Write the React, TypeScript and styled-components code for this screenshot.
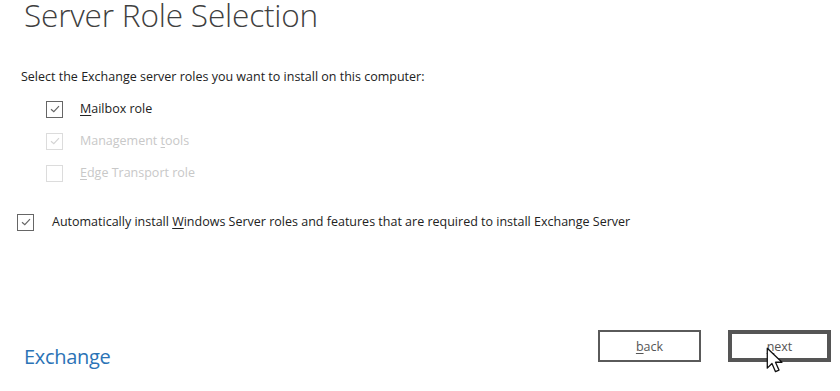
import React from "react";
import styled, { createGlobalStyle } from "styled-components";

const Global = createGlobalStyle`
  html, body { margin: 0; padding: 0; background: #ffffff; }
  body { font-family: "Open Sans", "Noto Sans", sans-serif; }
`;

const Page = styled.div`
  width: 840px;
  height: 391px;
  box-sizing: border-box;
  display: flex;
  flex-direction: column;
  background: #fff;
  overflow: hidden;
`;

const Title = styled.h1`
  margin: 0;
  padding: 0 0 0 24px;
  font-family: "Open Sans", "Noto Sans", sans-serif;
  font-weight: 300;
  font-size: 31.6px;
  line-height: 30px;
  color: #3f3f3f;
  letter-spacing: -0.2px;
`;

const Body = styled.div`
  display: flex;
  flex-direction: column;
  padding: 38px 0 0 21px;
  flex: 1;
`;

const Prompt = styled.div`
  font-size: 12.5px;
  line-height: 18px;
  color: #222;
`;

const RoleList = styled.div`
  display: flex;
  flex-direction: column;
  gap: 14px;
  margin: 14px 0 0 25px;
`;

const Row = styled.label<{ $disabled?: boolean }>`
  display: flex;
  align-items: center;
  gap: 17px;
  font-size: 12.5px;
  line-height: 18px;
  color: ${(p) => (p.$disabled ? "#c8c8c8" : "#222")};
`;

const Box = styled.span<{ $disabled?: boolean }>`
  width: 17px;
  height: 17px;
  box-sizing: border-box;
  border: 1.5px solid ${(p) => (p.$disabled ? "#dcdcdc" : "#666")};
  display: flex;
  align-items: center;
  justify-content: center;
  background: #fff;
  flex: none;
`;

const U = styled.span`
  text-decoration: underline;
  text-underline-offset: 2px;
`;

const AutoRow = styled(Row)`
  margin: 31px 0 0 -4px;
  gap: 18px;
`;

const Footer = styled.div`
  display: flex;
  align-items: flex-start;
  justify-content: space-between;
  padding: 0 9px 20px 24px;
`;

const Brand = styled.div`
  font-size: 20px;
  line-height: 28px;
  color: #2b73b6;
  letter-spacing: -0.3px;
  margin-top: 13px;
`;

const Buttons = styled.div`
  display: flex;
  gap: 27px;
  position: relative;
`;

const Button = styled.button<{ $primary?: boolean }>`
  width: 103px;
  height: 32px;
  box-sizing: border-box;
  background: #fff;
  border: ${(p) => (p.$primary ? "4px solid #555" : "2px solid #5a5a5a")};
  font-family: "Open Sans", "Noto Sans", sans-serif;
  font-size: 12.5px;
  color: #555;
  padding: 0;
  cursor: default;
`;

const Cursor = styled.svg`
  position: absolute;
  left: 168px;
  top: 17px;
  pointer-events: none;
`;

function Check({ disabled }: { disabled?: boolean }) {
  return (
    <svg width="10" height="8" viewBox="0 0 10 8">
      <path
        d="M1 4.2 L3.8 6.6 L9 1.2"
        fill="none"
        stroke={disabled ? "#d4d4d4" : "#666"}
        strokeWidth="1.2"
      />
    </svg>
  );
}

export default function App() {
  return (
    <>
      <Global />
      <Page>
        <Title>Server Role Selection</Title>
        <Body>
          <Prompt>Select the Exchange server roles you want to install on this computer:</Prompt>
          <RoleList>
            <Row>
              <Box><Check /></Box>
              <span><U>M</U>ailbox role</span>
            </Row>
            <Row $disabled>
              <Box $disabled><Check disabled /></Box>
              <span>Management <U>t</U>ools</span>
            </Row>
            <Row $disabled>
              <Box $disabled />
              <span><U>E</U>dge Transport role</span>
            </Row>
          </RoleList>
          <AutoRow>
            <Box><Check /></Box>
            <span>
              Automatically install <U>W</U>indows Server roles and features that are required to install Exchange Server
            </span>
          </AutoRow>
        </Body>
        <Footer>
          <Brand>Exchange</Brand>
          <Buttons>
            <Button><U>b</U>ack</Button>
            <Button $primary><U>n</U>ext</Button>
            <Cursor width="19" height="27" viewBox="0 0 16 23">
              <path
                d="M1 1 L1 18 L5 14 L8 21 L11 19.7 L8 13 L13.5 13 Z"
                fill="#fff"
                stroke="#111"
                strokeWidth="1.1"
                strokeLinejoin="round"
              />
            </Cursor>
          </Buttons>
        </Footer>
      </Page>
    </>
  );
}
